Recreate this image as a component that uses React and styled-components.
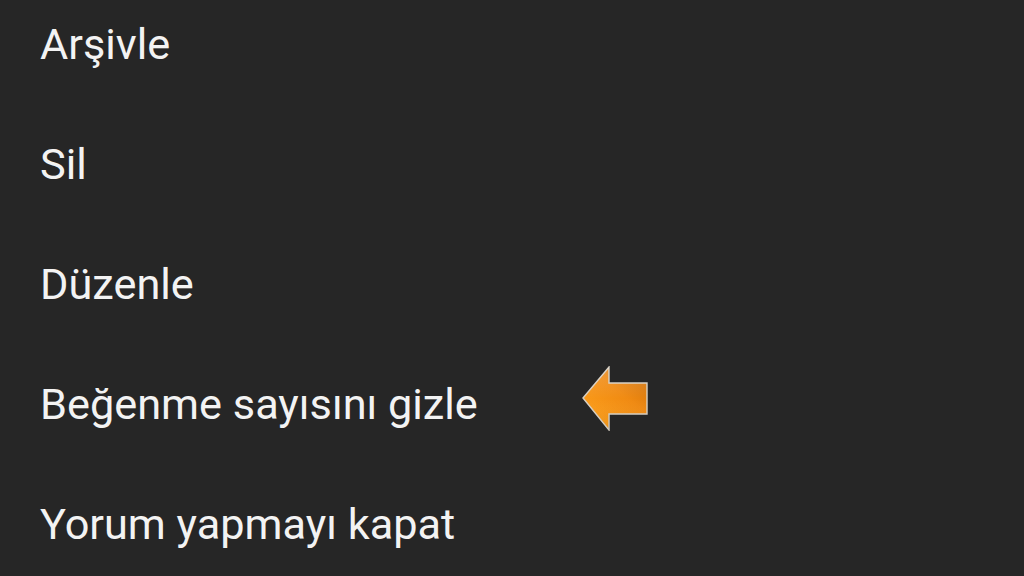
import React from "react";
import styled, { createGlobalStyle } from "styled-components";

const Global = createGlobalStyle`
  html, body {
    margin: 0;
    padding: 0;
    background: #262626;
  }
  body {
    width: 1024px;
    height: 576px;
    overflow: hidden;
    font-family: Roboto, "Noto Sans", sans-serif;
  }
`;

const Menu = styled.ul`
  list-style: none;
  margin: -15px 0 0 0;
  padding: 0 0 0 40px;
  display: flex;
  flex-direction: column;
`;

const Item = styled.li`
  display: flex;
  align-items: center;
  height: 120px;
`;

const Label = styled.span`
  font-size: 43.3px;
  line-height: 48px;
  color: #f3f3f3;
  font-weight: 400;
`;

const Pointer = styled.svg`
  display: block;
  margin-left: ${(p) => p.$gap}px;
  margin-top: -13px;
  flex: none;
`;

function ArrowMark({ gap }) {
  return (
    <Pointer $gap={gap} width="66" height="65" viewBox="0 0 66 65">
      <defs>
        <linearGradient id="arrowFill" x1="1" y1="0" x2="0.2" y2="1">
          <stop offset="0" stopColor="#c86a06" />
          <stop offset="0.45" stopColor="#f08a12" />
          <stop offset="1" stopColor="#ffa21c" />
        </linearGradient>
        <linearGradient id="arrowShine" x1="0" y1="0" x2="0" y2="1">
          <stop offset="0" stopColor="#ffffff" stopOpacity="0.18" />
          <stop offset="0.5" stopColor="#ffffff" stopOpacity="0" />
          <stop offset="1" stopColor="#000000" stopOpacity="0.08" />
        </linearGradient>
      </defs>
      <polygon
        points="1,32 27,1 27,17 65,17 65,48 27,48 27,64"
        fill="url(#arrowFill)"
        stroke="#d8d0c4"
        strokeWidth="1.4"
        strokeLinejoin="miter"
      />
      <polygon
        points="1,32 27,1 27,17 65,17 65,48 27,48 27,64"
        fill="url(#arrowShine)"
      />
    </Pointer>
  );
}

const entries = [
  { text: "Arşivle" },
  { text: "Sil" },
  { text: "Düzenle" },
  { text: "Beğenme sayısını gizle", marked: true },
  { text: "Yorum yapmayı kapat" },
];

export default function App() {
  return (
    <>
      <Global />
      <Menu>
        {entries.map((e) => (
          <Item key={e.text}>
            <Label>{e.text}</Label>
            {e.marked && <ArrowMark gap={104} />}
          </Item>
        ))}
      </Menu>
    </>
  );
}
